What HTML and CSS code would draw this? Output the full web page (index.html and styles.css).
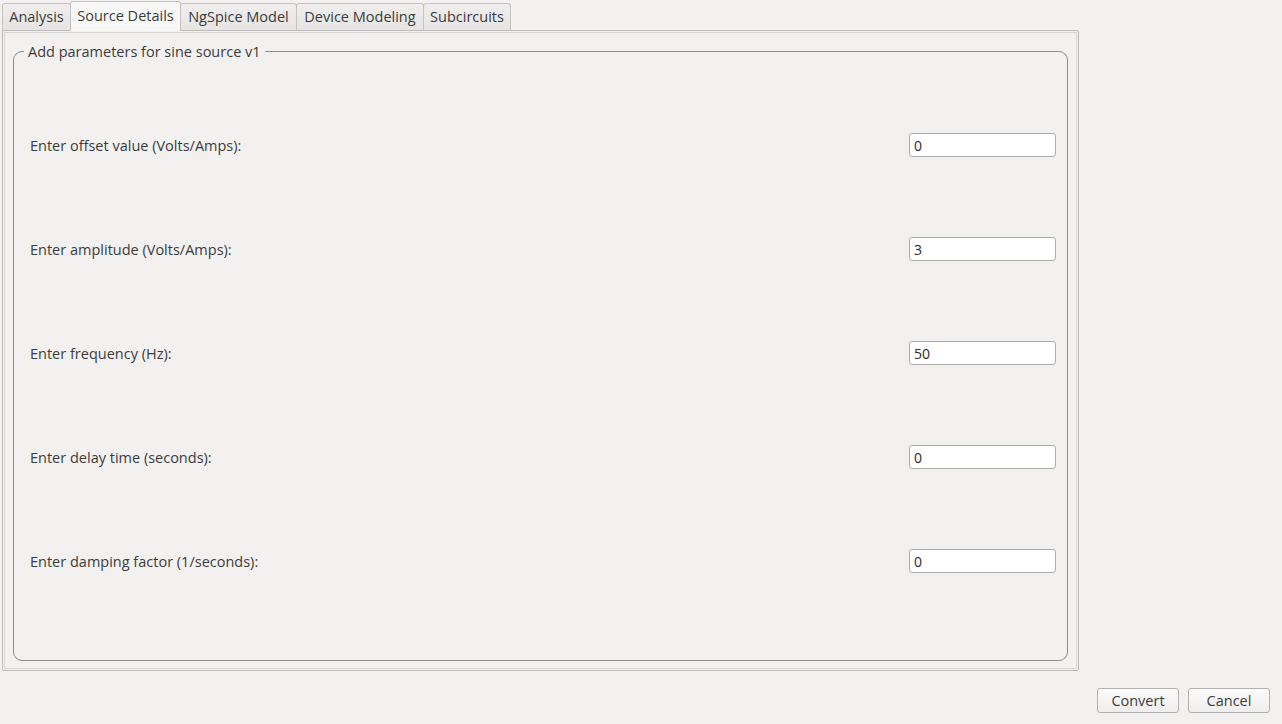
FILE: index.html
```html
<!DOCTYPE html>
<html lang="en">
<head>
  <meta charset="UTF-8">
  <title>Source Details</title>
  <link rel="stylesheet" href="styles.css">
</head>
<body>
  <div class="window">
    <div class="tab-bar">
      <div class="tab tab-analysis">Analysis</div>
      <div class="tab tab-source active">Source Details</div>
      <div class="tab tab-ngspice">NgSpice Model</div>
      <div class="tab tab-device">Device Modeling</div>
      <div class="tab tab-sub">Subcircuits</div>
    </div>
    <div class="tab-pane">
      <div class="tab-pane-inner">
        <fieldset class="group">
          <legend class="group-title">Add parameters for sine source v1</legend>
          <div class="param-row">
            <span class="param-label">Enter offset value (Volts/Amps):</span>
            <input class="param-input" value="0">
          </div>
          <div class="param-row">
            <span class="param-label">Enter amplitude (Volts/Amps):</span>
            <input class="param-input" value="3">
          </div>
          <div class="param-row">
            <span class="param-label">Enter frequency (Hz):</span>
            <input class="param-input" value="50">
          </div>
          <div class="param-row">
            <span class="param-label">Enter delay time (seconds):</span>
            <input class="param-input" value="0">
          </div>
          <div class="param-row">
            <span class="param-label">Enter damping factor (1/seconds):</span>
            <input class="param-input" value="0">
          </div>
        </fieldset>
      </div>
    </div>
    <div class="actions">
      <button class="btn">Convert</button>
      <button class="btn">Cancel</button>
    </div>
  </div>
</body>
</html>
```

FILE: styles.css
```css
html, body { margin: 0; height: 100%; }
body { background: #f2f1f0; font-family: 'Open Sans', 'DejaVu Sans', sans-serif; font-size: 14.5px; color: #3c3c3c; }
.window { width: 1282px; height: 724px; position: relative; }

.tab-bar { display: flex; align-items: flex-end; height: 30px; padding-left: 2px; }
.tab { height: 27px; line-height: 26px; box-sizing: border-box; border: 1px solid #c4c3c1; border-bottom: none; border-radius: 3px 3px 0 0; background: linear-gradient(#efeeed, #e6e5e3); text-align: center; margin-right: -1px; }
.tab.active { height: 30px; line-height: 27px; background: #f7f7f6; position: relative; z-index: 2; margin-bottom: -1px; }
.tab-analysis { width: 69px; }
.tab-source { width: 111px; }
.tab-ngspice { width: 117px; }
.tab-device { width: 128px; }
.tab-sub { width: 88px; }

.tab-pane { margin-left: 2px; width: 1077px; height: 641px; box-sizing: border-box; border: 1px solid #bdbcba; border-radius: 0 2px 2px 2px; padding: 1px; }
.tab-pane-inner { height: 100%; box-sizing: border-box; border: 1px solid #d8d7d5; padding: 10px 8px 9px 8px; }

.group { margin: 0; height: 619px; box-sizing: border-box; border: 1px solid #8c8b89; border-radius: 9px; padding: 32px 11px 0 16px; position: relative; top: -1px; }
.group-title { padding: 0 4px 0 4px; margin-left: -6px; color: #3c3c3c; }

.param-row { height: 104px; display: flex; align-items: center; justify-content: space-between; }
.param-label { color: #3c3c3c; }
.param-input { width: 147px; height: 24px; box-sizing: border-box; border: 1px solid #aeaca9; border-radius: 3px; background: #fff; font-family: inherit; font-size: 14px; color: #2a2a2a; padding: 0 4px; outline: none; }

.actions { position: absolute; right: 12px; top: 688px; display: flex; gap: 9px; }
.btn { width: 82px; height: 25px; border: 1px solid #b3b1ae; border-radius: 3px; background: linear-gradient(#fbfbfb, #efeeed); font-family: inherit; font-size: 14.5px; color: #3c3c3c; padding: 0; }
```
